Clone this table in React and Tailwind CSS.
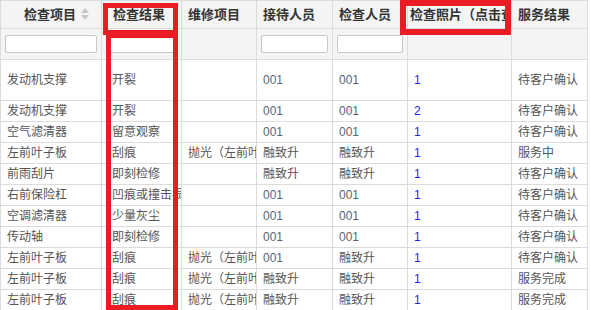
import React from "react";

const rows = [
  ["发动机支撑", "开裂", "", "001", "001", "1", "待客户确认"],
  ["发动机支撑", "开裂", "", "001", "001", "2", "待客户确认"],
  ["空气滤清器", "留意观察", "", "001", "001", "1", "待客户确认"],
  ["左前叶子板", "刮痕", "抛光（左前叶子板）", "融致升", "融致升", "1", "服务中"],
  ["前雨刮片", "即刻检修", "", "融致升", "融致升", "1", "待客户确认"],
  ["右前保险杠", "凹痕或撞击损伤", "", "001", "001", "1", "待客户确认"],
  ["空调滤清器", "少量灰尘", "", "001", "001", "1", "待客户确认"],
  ["传动轴", "即刻检修", "", "001", "001", "1", "待客户确认"],
  ["左前叶子板", "刮痕", "抛光（左前叶子板）", "001", "融致升", "1", "待客户确认"],
  ["左前叶子板", "刮痕", "抛光（左前叶子板）", "融致升", "融致升", "1", "服务完成"],
  ["左前叶子板", "刮痕", "抛光（左前叶子板）", "融致升", "融致升", "1", "服务完成"],
];

const widths = [101, 80, 75, 76, 75, 104, 76];

function SortIcon() {
  return (
    <svg width="8" height="12" viewBox="0 0 8 12" className="inline-block ml-[5px] align-[-1px]">
      <path d="M4 0 L8 5 L0 5 Z" fill="#c9c9c9" />
      <path d="M4 12 L8 7 L0 7 Z" fill="#c9c9c9" />
    </svg>
  );
}

function FilterInput() {
  return <div className="h-[18px] w-full rounded-[2px] border border-[#c8c8c8] bg-white" />;
}

// text that runs past the column is clipped, like the grid does
function Clip({ children }) {
  return <div className="overflow-hidden whitespace-nowrap">{children}</div>;
}

export default function App() {
  const cell = "border border-[#dcdcdc] px-[6px] whitespace-nowrap overflow-hidden";
  return (
    <div
      className="relative w-[591px] h-[310px] overflow-hidden bg-white text-[12px] text-[#555]"
      style={{ fontFamily: '"Liberation Sans", "Noto Sans CJK SC", sans-serif' }}
    >
      <table className="table-fixed border-collapse w-[588px]">
        <colgroup>
          {widths.map((w, i) => (
            <col key={i} style={{ width: w }} />
          ))}
        </colgroup>
        <thead>
          <tr className="h-[28px] bg-[#f4f4f4] text-[13px] font-bold text-[#333]">
            <th className={cell + " text-left pl-[23px]"}>
              检查项目
              <SortIcon />
            </th>
            <th className={cell + " text-left pl-[11px]"}>检查结果</th>
            <th className={cell + " text-left"}>维修项目</th>
            <th className={cell + " text-left"}>接待人员</th>
            <th className={cell + " text-left"}>检查人员</th>
            <th className={cell + " text-left pl-[2px]"}>
              <Clip>检查照片（点击查看）</Clip>
            </th>
            <th className={cell + " text-left"}>服务结果</th>
          </tr>
          <tr className="h-[31px] bg-[#f4f4f4]">
            <td className="border border-[#dcdcdc] px-[4px]"><FilterInput /></td>
            <td className="border border-[#dcdcdc] px-[4px]"><FilterInput /></td>
            <td className="border border-[#dcdcdc]" />
            <td className="border border-[#dcdcdc] px-[4px]"><FilterInput /></td>
            <td className="border border-[#dcdcdc] px-[4px]"><FilterInput /></td>
            <td className="border border-[#dcdcdc]" />
            <td className="border border-[#dcdcdc]" />
          </tr>
        </thead>
        <tbody>
          {rows.map((r, i) => (
            <tr key={i} className={i === 0 ? "h-[41px]" : "h-[21px]"}>
              <td className={cell}>{r[0]}</td>
              <td className={cell + " pl-[10px] pr-0"}><Clip>{r[1]}</Clip></td>
              <td className={cell + " pr-0"}><Clip>{r[2]}</Clip></td>
              <td className={cell + (r[3] === "001" ? " text-[#5a6478]" : "")}>{r[3]}</td>
              <td className={cell + (r[4] === "001" ? " text-[#5a6478]" : "")}>{r[4]}</td>
              <td className={cell + " text-[#1f1fe8]"}>{r[5]}</td>
              <td className={cell}>{r[6]}</td>
            </tr>
          ))}
        </tbody>
      </table>

      {/* red annotation boxes */}
      <div className="absolute left-[103px] top-[3px] w-[75px] h-[32px] border-[5px] border-[#ec1c24]" />
      <div className="absolute left-[106px] top-[33px] w-[72px] h-[277px] border-[5px] border-[#ec1c24]" />
      <div className="absolute left-[400px] top-0 w-[111px] h-[35px] border-[6px] border-[#ec1c24]" />
    </div>
  );
}
